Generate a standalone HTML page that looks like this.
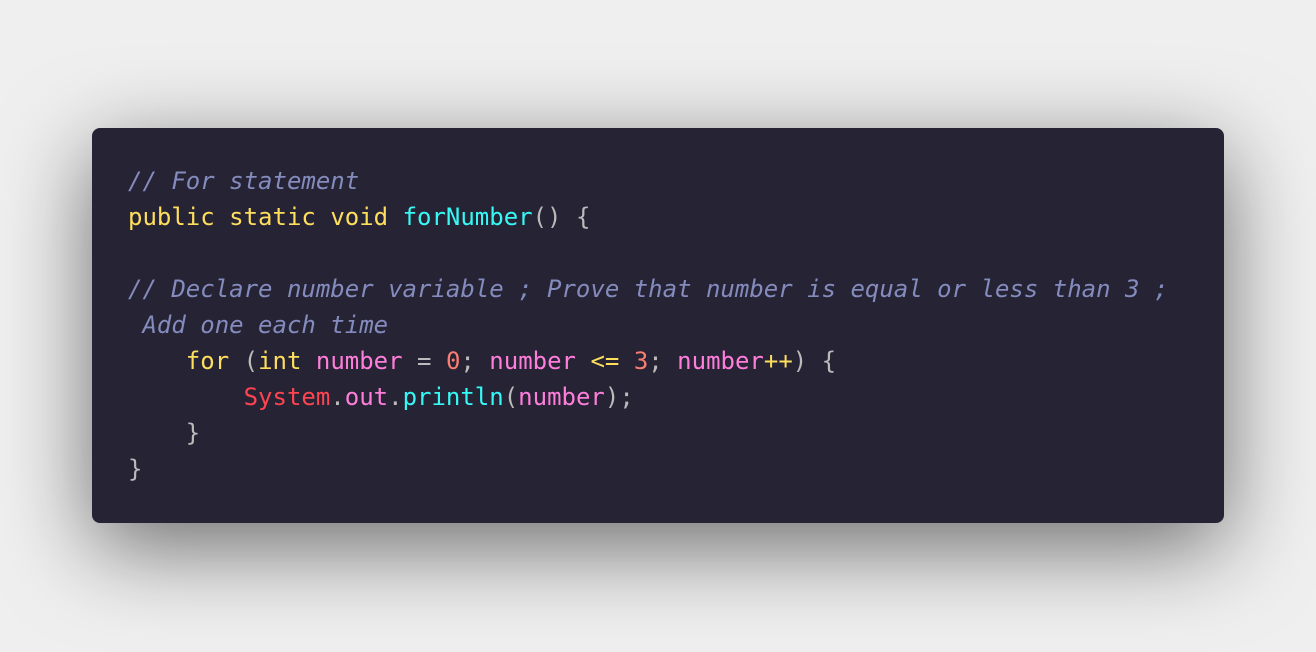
<!DOCTYPE html>
<html><head><style>
html,body{margin:0;padding:0;width:1316px;height:652px;background:#efefef;overflow:hidden}
.card{position:absolute;left:92px;top:128px;width:1132px;height:395px;background:#262335;border-radius:8px;box-shadow:0 24px 90px rgba(0,0,0,0.55)}
pre{position:absolute;left:36px;top:35px;margin:0;font-family:"DejaVu Sans Mono","Liberation Mono",monospace;font-size:24px;line-height:36px;color:#bbbbbb}
.c{color:#848bbd;font-style:italic}.k{color:#fede5d}.f{color:#36f9f6}.v{color:#ff7edb}.n{color:#f97e72}.r{color:#fe4450}
</style></head><body>
<div class="card"><pre><span class="c">// For statement</span>
<span class="k">public</span> <span class="k">static</span> <span class="k">void</span> <span class="f">forNumber</span>() {

<span class="c">// Declare number variable ; Prove that number is equal or less than 3 ;</span>
<span class="c"> Add one each time</span>
    <span class="k">for</span> (<span class="k">int</span> <span class="v">number</span> = <span class="n">0</span>; <span class="v">number</span> <span class="k">&lt;=</span> <span class="n">3</span>; <span class="v">number</span><span class="k">++</span>) {
        <span class="r">System</span>.<span class="v">out</span>.<span class="f">println</span>(<span class="v">number</span>);
    }
}</pre></div>
</body></html>
